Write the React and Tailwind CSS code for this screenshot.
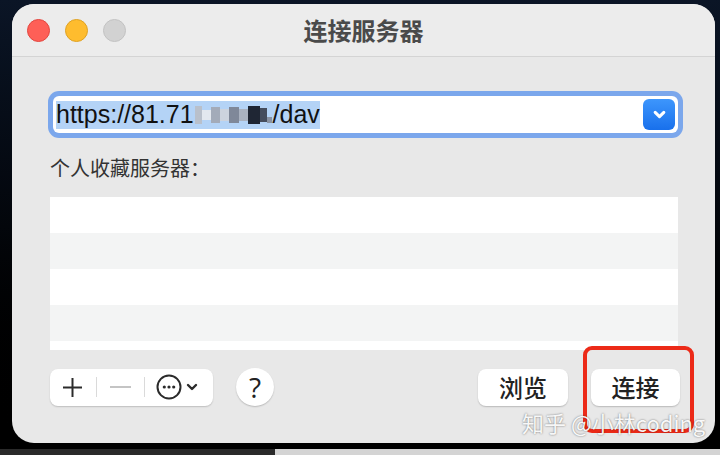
import React from 'react';

const cjk = { fontFamily: '"Noto Sans CJK SC", "Noto Sans", sans-serif' };

const Lights = () => (
  <div className="flex items-center gap-[15px]">
    <span className="w-[23px] h-[23px] rounded-full bg-[#fe5f57] border border-[#e2463f]" />
    <span className="w-[23px] h-[23px] rounded-full bg-[#febc2e] border border-[#dea123]" />
    <span className="w-[23px] h-[23px] rounded-full bg-[#d2d2d2] border border-[#c2c2c2]" />
  </div>
);

const Chevron = ({ className, stroke = 'currentColor', width = 2.6 }) => (
  <svg viewBox="0 0 12 8" className={className} fill="none">
    <path d="M2 2l4 4 4-4" stroke={stroke} strokeWidth={width} strokeLinecap="round" strokeLinejoin="round" />
  </svg>
);

// the blurred-out part of the address
const Mosaic = () => (
  <span className="inline-flex items-center h-[24px] mx-[1px]">
    <span className="w-[7px] h-[18px] bg-[#b9c0cb]" />
    <span className="w-[9px] h-[10px] bg-[#e3e8ef]" />
    <span className="w-[9px] h-[16px] bg-[#a3abb9]" />
    <span className="w-[9px] h-[12px] bg-[#ccd3de]" />
    <span className="w-[10px] h-[16px] bg-[#7f8899]" />
    <span className="w-[9px] h-[12px] bg-[#aab2c0]" />
    <span className="w-[12px] h-[18px] bg-[#1f2634]" />
    <span className="w-[7px] h-[14px] bg-[#454d5d]" />
    <span className="w-[5px] h-[6px] bg-[#8a93a3] self-end mb-[4px]" />
  </span>
);

const Rows = () => (
  <div className="ml-[38px] mt-[15px] w-[628px] h-[153px] flex flex-col overflow-hidden">
    {[0, 1, 2, 3, 4].map((i) => (
      <div key={i} className={`h-[36px] shrink-0 ${i % 2 ? 'bg-[#f3f4f4]' : 'bg-white'}`} />
    ))}
  </div>
);

const Segmented = () => (
  <div className="w-[163px] h-[37px] rounded-[8px] bg-white shadow-[0_1px_1.5px_rgba(0,0,0,0.18)] flex items-center text-[#2b2b2b]">
    <svg viewBox="0 0 21 21" className="w-[21px] h-[21px] ml-[12px]">
      <path d="M10.5 1v19M1 10.5h19" stroke="#2b2b2b" strokeWidth="2" />
    </svg>
    <span className="w-px h-[20px] bg-[#dadada] ml-[13px]" />
    <svg viewBox="0 0 21 4" className="w-[21px] h-[4px] ml-[13px]">
      <path d="M0 2h21" stroke="#c4c4c4" strokeWidth="2" />
    </svg>
    <span className="w-px h-[20px] bg-[#dadada] ml-[13px]" />
    <svg viewBox="0 0 26 26" className="w-[26px] h-[26px] ml-[11px]">
      <circle cx="13" cy="13" r="11.5" fill="none" stroke="#2b2b2b" strokeWidth="2" />
      <circle cx="8.3" cy="13" r="1.6" fill="#2b2b2b" />
      <circle cx="13" cy="13" r="1.6" fill="#2b2b2b" />
      <circle cx="17.7" cy="13" r="1.6" fill="#2b2b2b" />
    </svg>
    <Chevron className="w-[12px] h-[8px] ml-[4px]" stroke="#2b2b2b" width={2.4} />
  </div>
);

const Btn = ({ children, w }) => (
  <button
    className={`${w} h-[37px] rounded-[8px] bg-white shadow-[0_1px_1.5px_rgba(0,0,0,0.2)] text-[24px] font-medium text-[#222] flex items-center justify-center`}
    style={cjk}
  >
    {children}
  </button>
);

export default function App() {
  return (
    <div className="relative w-[720px] h-[455px] overflow-hidden bg-gradient-to-b from-[#0b1526] via-[#03060b] to-black flex flex-col">
      <div className="ml-[12px] mt-[4px] w-[703px] h-[439px] rounded-[22px] bg-[#e8e8e8] flex flex-col overflow-hidden">
        <div className="h-[53px] shrink-0 grid grid-cols-[1fr_auto_1fr] items-center px-[15px] bg-[#ececec] border-b border-[#d4d4d4]">
          <Lights />
          <div className="text-[24px] font-bold text-[#4a4a4a]" style={cjk}>连接服务器</div>
          <div />
        </div>

        <div className="ml-[36px] mr-[32px] mt-[34px] h-[47px] rounded-[11px] bg-[#7ba7ec] p-[5px]">
          <div className="h-full rounded-[6px] bg-white flex items-center pl-[3px] pr-[3px]">
            <span
              className="h-[28px] bg-[#b4d3f6] flex items-center text-[25px] text-[#111] leading-none"
              style={{ fontFamily: '"Liberation Sans", Arial, sans-serif' }}
            >
              https://81.71<Mosaic />/dav
            </span>
            <div className="ml-auto w-[32px] h-[31px] rounded-[6px] bg-gradient-to-b from-[#3d96fc] to-[#1870ec] flex items-center justify-center">
              <Chevron className="w-[13px] h-[9px]" stroke="#ffffff" width={2.8} />
            </div>
          </div>
        </div>

        <div className="ml-[38px] mt-[16px] h-[28px] leading-[28px] text-[20px] text-[#333]" style={cjk}>
          个人收藏服务器：
        </div>

        <Rows />

        <div className="mt-[18px] ml-[38px] mr-[35px] h-[38px] flex items-center">
          <Segmented />
          <div className="ml-[23px] w-[38px] h-[38px] rounded-full bg-white shadow-[0_1px_1.5px_rgba(0,0,0,0.2)] flex items-center justify-center text-[28px] font-medium text-[#222]" style={{ fontFamily: '"Open Sans", "Liberation Sans", sans-serif' }}>
            ?
          </div>
          <div className="ml-auto flex items-center gap-[23px]">
            <Btn w="w-[90px]">浏览</Btn>
            <Btn w="w-[89px]">连接</Btn>
          </div>
        </div>
      </div>

      <div className="mt-[6px] h-[6px] flex">
        <div className="w-[275px] bg-[#2a2a2a]" />
        <div className="flex-1 bg-[#d4d4d4]" />
      </div>

      {/* annotation overlay */}
      <div className="absolute left-[583px] top-[346px] w-[111px] h-[87px] border-[4px] border-[#ec2a18] rounded-[9px]" />
      <div
        className="absolute left-[522px] top-[407px] text-[22px] leading-[30px] text-white/95 whitespace-nowrap [text-shadow:0_0_2px_rgba(0,0,0,0.55)]"
        style={cjk}
      >
        知乎 @小林coding
      </div>
    </div>
  );
}
